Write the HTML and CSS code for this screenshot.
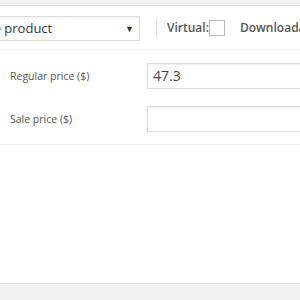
FILE: index.html
```html
<!DOCTYPE html>
<html>
<head>
<meta charset="utf-8">
<link rel="stylesheet" href="styles.css">
</head>
<body>
<div class="top-strip"></div>
<div class="panel">
  <div class="toolbar">
    <div class="select">
      <span class="select-text">Simple product</span>
      <span class="arrow">▼</span>
    </div>
    <span class="sep"></span>
    <label class="opt">Virtual:<span class="check"></span></label>
    <label class="opt opt-dl">Downloadable:<span class="check"></span></label>
  </div>
  <div class="fields">
    <div class="row">
      <span class="label">Regular price ($)</span>
      <div class="input">47.3</div>
    </div>
    <div class="row">
      <span class="label">Sale price ($)</span>
      <div class="input"></div>
    </div>
  </div>
  <div class="blank"></div>
</div>
<div class="footer"></div>
</body>
</html>
```
FILE: styles.css
```css
html, body {
  margin: 0;
  padding: 0;
  width: 300px;
  height: 300px;
  overflow: hidden;
  background: #f1f1f1;
  font-family: "Open Sans", "Liberation Sans", sans-serif;
  color: #555;
}
.top-strip {
  height: 5px;
  background: #f1f1f1;
}
.panel {
  background: #fff;
  border-top: 1px solid #e5e5e5;
  border-bottom: 1px solid #e2e2e2;
  height: 277px;
  display: flex;
  flex-direction: column;
}
.toolbar {
  height: 43px;
  border-bottom: 1px solid #eee;
  display: flex;
  align-items: center;
  white-space: nowrap;
  overflow: hidden;
  font-size: 12px;
}
.select {
  flex: none;
  width: 174px;
  margin-left: -47px;
  height: 23px;
  border: 1px solid #ddd;
  box-shadow: inset 0 1px 2px rgba(0,0,0,.07);
  display: flex;
  align-items: center;
  justify-content: space-between;
  padding: 0 5px 0 6px;
  color: #32373c;
  font-size: 13px;
  margin-top: 1px;
}
.select-text {
  line-height: 1;
}
.arrow {
  font-size: 9px;
  color: #333;
}
.sep {
  flex: none;
  width: 1px;
  height: 18px;
  background: #ddd;
  margin-left: 16px;
  margin-right: 10px;
}
.opt {
  flex: none;
  font-weight: 600;
  color: #555;
  display: flex;
  align-items: center;
}
.check {
  display: inline-block;
  width: 14px;
  height: 14px;
  border: 1px solid #b4b9be;
  margin-left: 0;
  background: #fff;
}
.opt-dl {
  margin-left: 15px;
}
.fields {
  border-bottom: 1px solid #eee;
  padding: 13px 0 12px 10px;
  display: flex;
  flex-direction: column;
  gap: 17px;
  overflow: hidden;
}
.row {
  display: flex;
  align-items: center;
  height: 26px;
}
.label {
  flex: none;
  width: 137px;
  font-size: 10.5px;
  color: #555;
  white-space: nowrap;
}
.input {
  flex: none;
  width: 200px;
  height: 24px;
  border: 1px solid #ddd;
  box-shadow: inset 0 1px 2px rgba(0,0,0,.07);
  font-size: 14px;
  color: #444;
  line-height: 24px;
  padding-left: 5px;
}
.blank {
  flex: 1;
}
.footer {
  height: 16px;
  background: #f1f1f1;
}
```
